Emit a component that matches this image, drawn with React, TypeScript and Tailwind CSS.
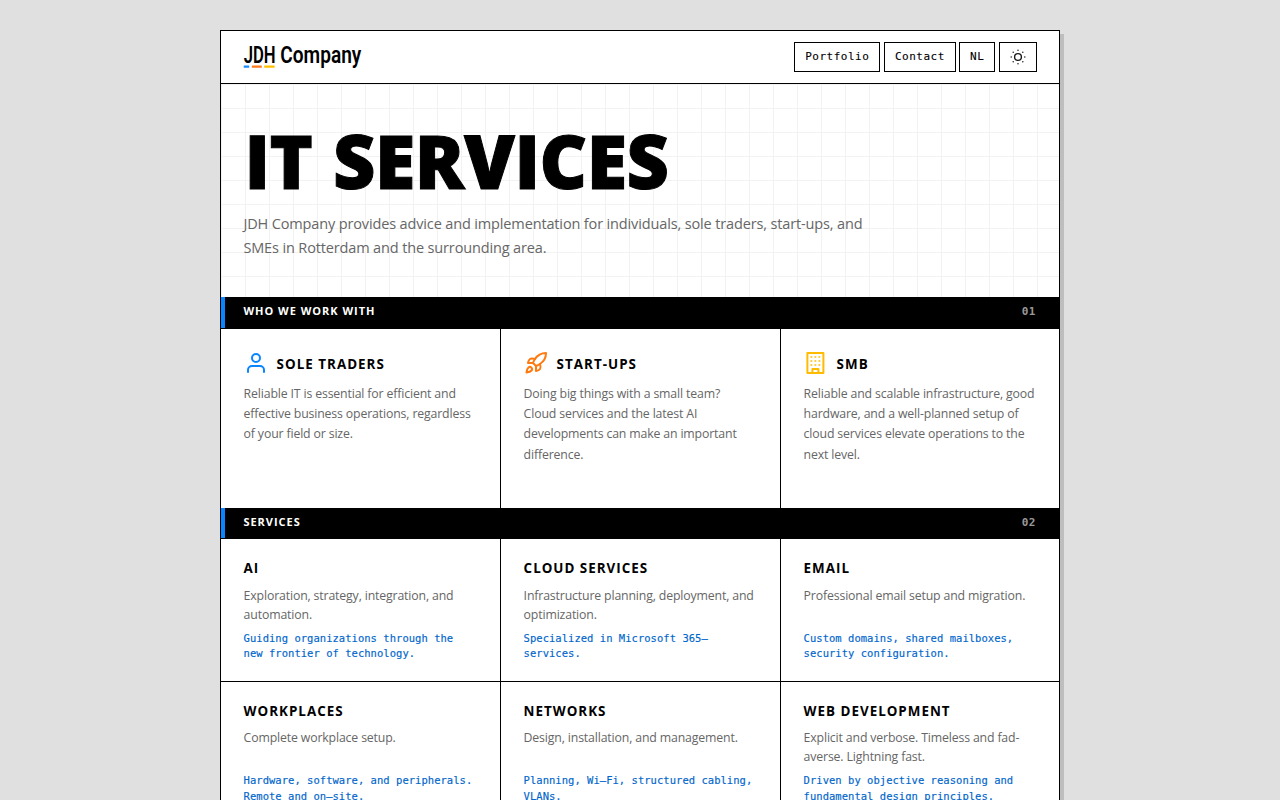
import { ReactNode } from "react";
import { Rocket } from "lucide-react";

type Audience = { title: string; icon: ReactNode; lines: string[] };
type Service = { title: string; lines: string[]; notes: string[] };

const UserIcon = () => (
  <svg
    className="size-6 text-[#0a84ff]"
    viewBox="0 0 24 24"
    fill="none"
    stroke="currentColor"
    strokeWidth="2"
    strokeLinecap="round"
    strokeLinejoin="round"
  >
    <path d="M20 21v-2a4 4 0 0 0-4-4H8a4 4 0 0 0-4 4v2" />
    <circle cx="12" cy="7" r="4" />
  </svg>
);

const BuildingIcon = () => (
  <svg
    className="size-6 text-[#ffbb00]"
    viewBox="0.6 0 24 24"
    fill="none"
    stroke="currentColor"
    strokeWidth="2"
    strokeLinejoin="round"
  >
    <rect x="4" y="2" width="16" height="20" />
    <path d="M9 22v-4h6v4" />
    <path
      strokeWidth="1.7"
      d="M7.1 6h1.8M11.1 6h1.8M15.1 6h1.8M7.1 10h1.8M11.1 10h1.8M15.1 10h1.8M7.1 14h1.8M11.1 14h1.8M15.1 14h1.8"
    />
  </svg>
);

const SunIcon = () => (
  <svg className="size-4" viewBox="0 0 16 16" fill="none">
    <circle cx="8" cy="8" r="3.4" stroke="#1a1a1a" strokeWidth="1.4" />
    <path
      d="M8 1.2h.01M8 14.8h.01M1.2 8h.01M14.8 8h.01M3.2 3.2h.01M12.8 3.2h.01M3.2 12.8h.01M12.8 12.8h.01"
      stroke="#1a1a1a"
      strokeWidth="1.5"
      strokeLinecap="round"
    />
  </svg>
);

const Logo = () => (
  <svg className="h-[42px] w-[122px]" viewBox="0 -6 122 42">
    <g fontFamily="Roboto, 'Liberation Sans', sans-serif" fontSize="24" fontWeight="600">
      <text x="0.7" y="21.3" textLength="32" lengthAdjust="spacingAndGlyphs">
        JDH
      </text>
      <text x="37.3" y="21.3" textLength="81" lengthAdjust="spacingAndGlyphs">
        Company
      </text>
    </g>
    <rect x="0.7" y="23.5" width="5.5" height="2.2" rx="0.5" fill="#1a8cff" />
    <rect x="8.8" y="23.5" width="10" height="2.2" rx="0.5" fill="#ff7a1a" />
    <rect x="21.2" y="23.5" width="10.5" height="2.2" rx="0.5" fill="#ffc000" />
  </svg>
);

const audiences: Audience[] = [
  {
    title: "SOLE TRADERS",
    icon: <UserIcon />,
    lines: [
      "Reliable IT is essential for efficient and",
      "effective business operations, regardless",
      "of your field or size.",
    ],
  },
  {
    title: "START-UPS",
    icon: <Rocket className="size-6 text-[#ff7a0f]" />,
    lines: [
      "Doing big things with a small team?",
      "Cloud services and the latest AI",
      "developments can make an important",
      "difference.",
    ],
  },
  {
    title: "SMB",
    icon: <BuildingIcon />,
    lines: [
      "Reliable and scalable infrastructure, good",
      "hardware, and a well-planned setup of",
      "cloud services elevate operations to the",
      "next level.",
    ],
  },
];

const services: Service[] = [
  {
    title: "AI",
    lines: ["Exploration, strategy, integration, and", "automation."],
    notes: ["Guiding organizations through the", "new frontier of technology."],
  },
  {
    title: "CLOUD SERVICES",
    lines: ["Infrastructure planning, deployment, and", "optimization."],
    notes: ["Specialized in Microsoft 365–", "services."],
  },
  {
    title: "EMAIL",
    lines: ["Professional email setup and migration."],
    notes: ["Custom domains, shared mailboxes,", "security configuration."],
  },
  {
    title: "WORKPLACES",
    lines: ["Complete workplace setup."],
    notes: ["Hardware, software, and peripherals.", "Remote and on–site."],
  },
  {
    title: "NETWORKS",
    lines: ["Design, installation, and management."],
    notes: ["Planning, Wi–Fi, structured cabling,", "VLANs."],
  },
  {
    title: "WEB DEVELOPMENT",
    lines: ["Explicit and verbose. Timeless and fad-", "averse. Lightning fast."],
    notes: ["Driven by objective reasoning and", "fundamental design principles."],
  },
];

const Lines = ({ items }: { items: string[] }) => (
  <>
    {items.map((line) => (
      <span key={line} className="block whitespace-nowrap">
        {line}
      </span>
    ))}
  </>
);

const NavButton = ({ className, children }: { className: string; children: ReactNode }) => (
  <button
    className={`flex h-[30px] items-center justify-center border border-black font-['DejaVu_Sans_Mono',monospace] text-[11px] leading-4 tracking-[0.5px] [-webkit-text-stroke:0.1px] ${className}`}
  >
    {children}
  </button>
);

const SectionBar = ({ title, num, className }: { title: string; num: string; className: string }) => (
  <div className={`border-b border-black bg-black ${className}`}>
    <div className="flex h-full items-start justify-between border-l-4 border-[#0a84ff] pt-[6px] pr-[23px] pl-[18.4px]">
      <h2 className="text-[11px] leading-4 font-bold tracking-[0.99px] text-white">{title}</h2>
      <span className="pt-px font-['DejaVu_Sans_Mono',monospace] text-[11px] leading-4 font-bold tracking-[0.5px] text-[#999]">
        {num}
      </span>
    </div>
  </div>
);

export default function App() {
  return (
    <div className="h-screen overflow-hidden bg-[#e0e0e0] pt-[30px] font-['Open_Sans','Noto_Sans',sans-serif] text-black">
      <main className="mx-auto w-[840px] border border-black bg-white shadow-[4px_4px_0_#bebebe]">
        <header className="flex h-[53px] items-center justify-between border-b border-black pr-[22.4px] pl-[22.4px]">
          <Logo />
          <nav className="flex gap-[3.6px]">
            <NavButton className="w-[86px]">Portfolio</NavButton>
            <NavButton className="w-[72px]">Contact</NavButton>
            <NavButton className="w-[35.6px]">NL</NavButton>
            <NavButton className="w-[38px]">
              <SunIcon />
            </NavButton>
          </nav>
        </header>

        <section className="h-[213px] bg-[linear-gradient(#f2f2f2_1px,transparent_1px),linear-gradient(90deg,#f2f2f2_1px,transparent_1px)] bg-size-[24px_24px] pt-[38px] pl-[22.4px]">
          <h1 className="pl-px text-[73.5px] leading-[77px] font-extrabold tracking-[-0.5px] [word-spacing:2px] [-webkit-text-stroke:1px]">
            IT SERVICES
          </h1>
          <p className="mt-[13px] text-[14.5px] leading-[24.3px] tracking-[-0.14px] text-[#666]">
            <Lines
              items={[
                "JDH Company provides advice and implementation for individuals, sole traders, start-ups, and",
                "SMEs in Rotterdam and the surrounding area.",
              ]}
            />
          </p>
        </section>

        <SectionBar title="WHO WE WORK WITH" num="01" className="h-8" />
        <section className="grid h-[179px] grid-cols-[280px_280px_278px]">
          {audiences.map((a) => (
            <article key={a.title} className="border-r border-black pt-[22px] pl-[22.6px] last:border-r-0">
              <div className="flex items-center gap-[9px]">
                {a.icon}
                <h3 className="pt-[2px] text-[13.4px] leading-[18px] font-bold tracking-[1.02px]">{a.title}</h3>
              </div>
              <p className="mt-[9px] text-[12.3px] leading-[20.2px] tracking-[-0.15px] text-[#666]">
                <Lines items={a.lines} />
              </p>
            </article>
          ))}
        </section>

        <SectionBar title="SERVICES" num="02" className="h-[31px]" />
        <section className="grid grid-cols-[280px_280px_278px]">
          {services.map((s) => (
            <article
              key={s.title}
              className="h-[142.6px] border-r border-b border-black pt-[20px] pl-[22.6px] nth-[3n]:border-r-0"
            >
              <h3 className="text-[13.4px] leading-[18px] font-bold tracking-[1px]">{s.title}</h3>
              <p className="mt-[8.8px] min-h-[38px] text-[12.3px] leading-[19px] tracking-[-0.15px] text-[#666]">
                <Lines items={s.lines} />
              </p>
              <p className="mt-[6.9px] font-['DejaVu_Sans_Mono',monospace] text-[10.5px] leading-[15.3px] tracking-[0.03px] text-[#0066cc] [-webkit-text-stroke:0.15px]">
                <Lines items={s.notes} />
              </p>
            </article>
          ))}
        </section>
      </main>
    </div>
  );
}
